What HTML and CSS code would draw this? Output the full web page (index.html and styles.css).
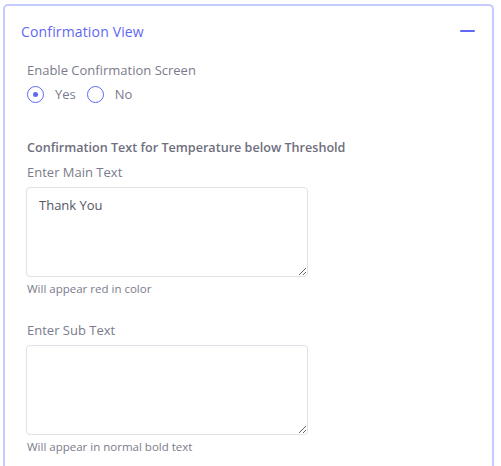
FILE: index.html
```html
<!DOCTYPE html>
<html>
<head>
<meta charset="utf-8">
<link rel="stylesheet" href="styles.css">
</head>
<body>
<div class="card">
  <div class="card-header">
    <span class="card-title">Confirmation View</span>
    <span class="collapse-icon"></span>
  </div>
  <div class="card-body">
    <div class="field-label">Enable Confirmation Screen</div>
    <div class="radio-row">
      <label class="radio"><span class="radio-circle checked"></span><span class="radio-text">Yes</span></label>
      <label class="radio"><span class="radio-circle"></span><span class="radio-text">No</span></label>
    </div>
    <div class="section-title">Confirmation Text for Temperature below Threshold</div>
    <div class="field-label main">Enter Main Text</div>
    <textarea class="text-area">Thank You</textarea>
    <div class="hint">Will appear red in color</div>
    <div class="field-label second">Enter Sub Text</div>
    <textarea class="text-area"></textarea>
    <div class="hint">Will appear in normal bold text</div>
  </div>
</div>
</body>
</html>
```
FILE: styles.css
```css
html, body {
  margin: 0;
  padding: 0;
  background: #ffffff;
}
body {
  font-family: "Open Sans", "Noto Sans", sans-serif;
  color: #7b7b8c;
}
.card {
  margin: 4px 0 0 3px;
  width: 487px;
  height: 480px;
  border: 2px solid #c5caff;
  border-bottom: none;
  border-radius: 5px 5px 0 0;
}
.card-header {
  display: flex;
  align-items: center;
  justify-content: space-between;
  padding: 14px 17px 0 16px;
  height: 22px;
}
.card-title {
  font-size: 14px;
  color: #5f68f4;
  letter-spacing: 0.15px;
}
.collapse-icon {
  width: 15px;
  height: 2px;
  background: #5f68f4;
  border-radius: 1px;
}
.card-body {
  padding: 19px 22px 0 22px;
}
.field-label {
  font-size: 13px;
  line-height: 18px;
}
.field-label.main {
  margin-top: 6px;
}
.field-label.second {
  margin-top: 25px;
}
.radio-row {
  display: flex;
  align-items: center;
  margin-top: 6px;
}
.radio {
  display: flex;
  align-items: center;
  margin-right: 11px;
}
.radio-circle {
  box-sizing: border-box;
  width: 17px;
  height: 17px;
  border: 1.5px solid #5f68f4;
  border-radius: 50%;
  display: flex;
  align-items: center;
  justify-content: center;
}
.radio-circle.checked::after {
  content: "";
  width: 5px;
  height: 5px;
  border-radius: 50%;
  background: #5f68f4;
}
.radio-text {
  margin-left: 11px;
  font-size: 13px;
  color: #7b7b8c;
}
.section-title {
  margin-top: 36px;
  font-size: 12.6px;
  font-weight: 600;
  color: #6e6e7e;
  line-height: 18px;
}
.text-area {
  display: block;
  box-sizing: border-box;
  width: 282px;
  height: 90px;
  margin-top: 6px;
  margin-left: -1px;
  padding: 8px 12px;
  border: 1px solid #e1e1ea;
  border-radius: 4px;
  font-family: inherit;
  font-size: 13px;
  color: #555566;
  resize: vertical;
  outline: none;
}
.hint {
  margin-top: 4px;
  font-size: 11.5px;
  line-height: 15px;
  color: #7b7b8c;
}
```
